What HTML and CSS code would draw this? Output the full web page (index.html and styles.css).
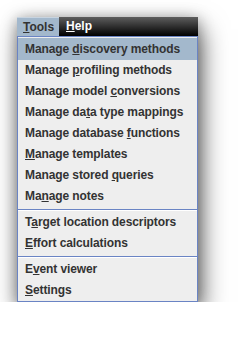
FILE: index.html
```html
<!DOCTYPE html>
<html lang="en">
<head>
    <meta charset="UTF-8">
    <title>Tools menu</title>
    <link rel="stylesheet" href="styles.css">
</head>
<body>
    <div class="window">
        <div class="menubar">
            <span class="menu open"><u>T</u>ools</span>
            <span class="menu"><u>H</u>elp</span>
        </div>
        <div class="popup">
            <div class="item active">Manage <u>d</u>iscovery methods</div>
            <div class="item">Manage <u>p</u>rofiling methods</div>
            <div class="item">Manage model <u>c</u>onversions</div>
            <div class="item">Manage da<u>t</u>a type mappings</div>
            <div class="item">Manage database <u>f</u>unctions</div>
            <div class="item"><u>M</u>anage templates</div>
            <div class="item">Manage stored <u>q</u>ueries</div>
            <div class="item">Ma<u>n</u>age notes</div>
            <div class="separator"></div>
            <div class="item">T<u>a</u>rget location descriptors</div>
            <div class="item"><u>E</u>ffort calculations</div>
            <div class="separator"></div>
            <div class="item">E<u>v</u>ent viewer</div>
            <div class="item"><u>S</u>ettings</div>
        </div>
    </div>
</body>
</html>
```

FILE: styles.css
```css
body {
    margin: 0;
    background: #ffffff;
    font-family: 'Liberation Sans', Arial, sans-serif;
    font-size: 12px;
    font-weight: bold;
    color: #333333;
}

.window {
    width: 181px;
    margin: 17px 0 0 17px;
    box-shadow: 0 2px 14px rgba(0, 0, 0, 0.35), 4px 12px 24px rgba(0, 0, 0, 0.55);
}

.menubar {
    display: flex;
    height: 19px;
    background: linear-gradient(#5e5e5e, #000000);
}

.menu {
    padding: 0 6px 0 7px;
    line-height: 19px;
    color: #ffffff;
}

.menu.open {
    width: 30px;
    padding: 0 6px;
    background: #a3b8cc;
    color: #333333;
    border-top: 1px solid #c8d4e0;
    line-height: 18px;
}

.popup {
    background: #eeeeee;
    border: 1px solid #6a84c4;
    padding: 1px 0 0;
}

.item {
    height: 21px;
    line-height: 21px;
    padding-left: 7px;
    white-space: nowrap;
    letter-spacing: -0.1px;
}

.item.active {
    background: #a3b8cc;
    height: 22px;
    line-height: 22px;
}

.separator {
    height: 1px;
    margin: 2px 0 1px;
    background: #6a84c4;
    border-bottom: 1px solid #ffffff;
}
```
